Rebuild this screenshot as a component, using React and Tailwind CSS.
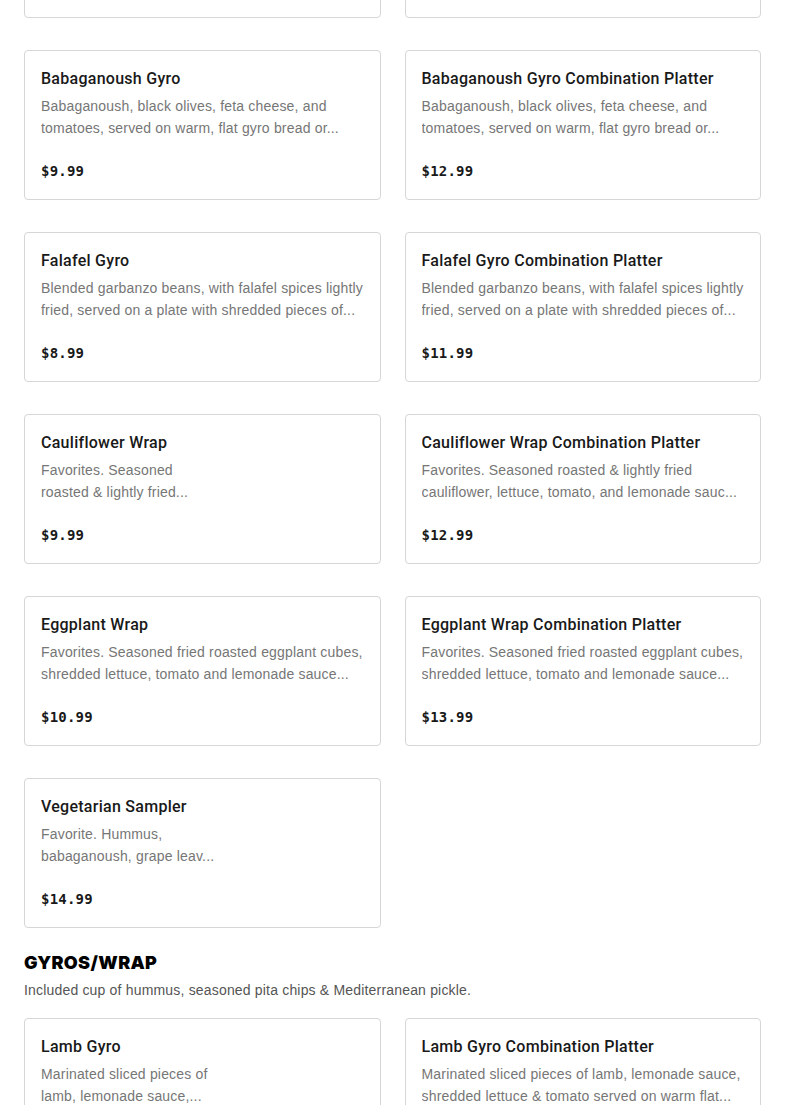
const items = [
  { name: "Hummus Gyro", lines: ["Hummus, black olives, feta cheese, and", "tomatoes, served on warm, flat gyro bread or..."], price: "$9.99" },
  { name: "Hummus Gyro Combination Platter", lines: ["Hummus, black olives, feta cheese, and", "tomatoes, served on warm, flat gyro bread or..."], price: "$12.99" },
  { name: "Babaganoush Gyro", lines: ["Babaganoush, black olives, feta cheese, and", "tomatoes, served on warm, flat gyro bread or..."], price: "$9.99" },
  { name: "Babaganoush Gyro Combination Platter", lines: ["Babaganoush, black olives, feta cheese, and", "tomatoes, served on warm, flat gyro bread or..."], price: "$12.99" },
  { name: "Falafel Gyro", lines: ["Blended garbanzo beans, with falafel spices lightly", "fried, served on a plate with shredded pieces of..."], price: "$8.99" },
  { name: "Falafel Gyro Combination Platter", lines: ["Blended garbanzo beans, with falafel spices lightly", "fried, served on a plate with shredded pieces of..."], price: "$11.99" },
  { name: "Cauliflower Wrap", lines: ["Favorites. Seasoned", "roasted & lightly fried..."], price: "$9.99" },
  { name: "Cauliflower Wrap Combination Platter", lines: ["Favorites. Seasoned roasted & lightly fried", "cauliflower, lettuce, tomato, and lemonade sauc..."], price: "$12.99" },
  { name: "Eggplant Wrap", lines: ["Favorites. Seasoned fried roasted eggplant cubes,", "shredded lettuce, tomato and lemonade sauce..."], price: "$10.99" },
  { name: "Eggplant Wrap Combination Platter", lines: ["Favorites. Seasoned fried roasted eggplant cubes,", "shredded lettuce, tomato and lemonade sauce..."], price: "$13.99" },
  { name: "Vegetarian Sampler", lines: ["Favorite. Hummus,", "babaganoush, grape leav..."], price: "$14.99" },
];

const gyros = [
  { name: "Lamb Gyro", lines: ["Marinated sliced pieces of", "lamb, lemonade sauce,..."], price: "$10.99" },
  { name: "Lamb Gyro Combination Platter", lines: ["Marinated sliced pieces of lamb, lemonade sauce,", "shredded lettuce & tomato served on warm flat..."], price: "$13.99" },
];

function Card({ item }) {
  return (
    <div className="border border-[#d6d6d6] rounded-[4px] bg-white px-4 py-4 h-[150px]">
      <div className="text-[16px] leading-6 font-medium text-[#191919] truncate font-['Roboto',sans-serif] tracking-[0.27px]">
        {item.name}
      </div>
      <div className="mt-[4px] text-[14px] leading-[22px] text-[#767676] tracking-[0.18px]">
        {item.lines.map((l, i) => (
          <div key={i} className="whitespace-nowrap overflow-hidden">
            {l}
          </div>
        ))}
      </div>
      <div className="mt-[20px] text-[14px] leading-6 font-bold text-[#191919] font-['DejaVu_Sans_Mono',monospace] tracking-[0.2px]">
        {item.price}
      </div>
    </div>
  );
}

export default function App() {
  return (
    <div className="bg-white min-h-screen overflow-hidden font-['Liberation_Sans',sans-serif]">
      <div className="px-6 -mt-[132px]">
        <div className="grid grid-cols-2 gap-x-6 gap-y-8">
          {items.map((it) => (
            <Card key={it.name} item={it} />
          ))}
        </div>
        <h2 className="mt-[21px] text-[18px] leading-7 font-black text-black font-['Inter',sans-serif] tracking-[0.3px]">
          GYROS/WRAP
        </h2>
        <p className="mt-[3px] text-[14px] leading-5 text-[#555555] tracking-[0.18px]">
          Included cup of hummus, seasoned pita chips &amp; Mediterranean pickle.
        </p>
        <div className="mt-[18px] grid grid-cols-2 gap-x-6 gap-y-8">
          {gyros.map((it) => (
            <Card key={it.name} item={it} />
          ))}
        </div>
      </div>
    </div>
  );
}
